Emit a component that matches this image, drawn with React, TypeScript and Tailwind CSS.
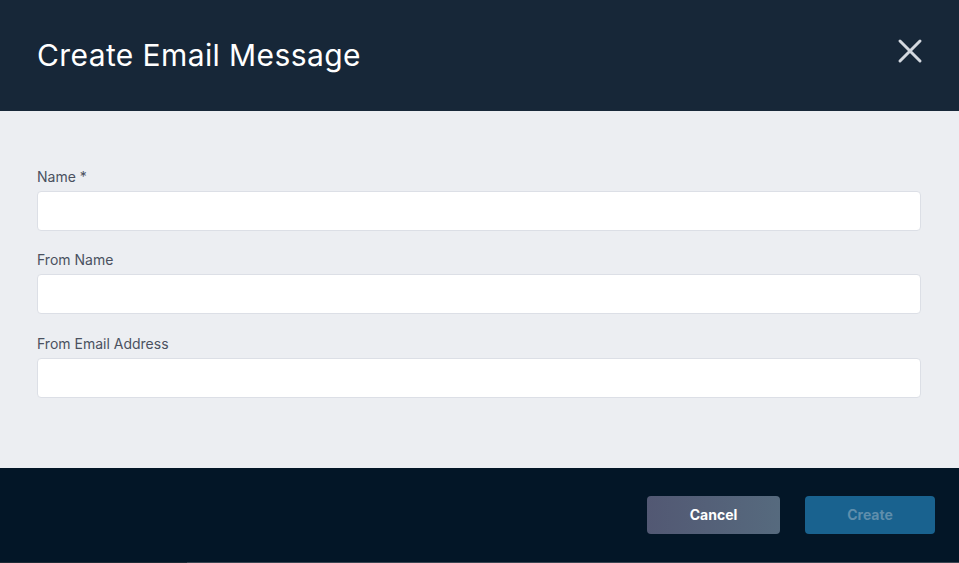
import React from 'react';

const fields = [
  { label: 'Name *', name: 'name' },
  { label: 'From Name', name: 'fromName' },
  { label: 'From Email Address', name: 'fromEmail' },
];

export default function App() {
  return (
    <div className="w-[959px] h-[563px] flex flex-col font-['Inter',sans-serif] overflow-hidden">
      {/* Header */}
      <div className="h-[111px] shrink-0 bg-[#172738] flex items-center justify-between pl-[37px] pr-[36px]">
        <h1 className="text-[30px] leading-none text-white font-normal tracking-[0.4px] -mt-[2px]">
          Create Email Message
        </h1>
        <button type="button" className="text-[#d3d8df] -mt-[9px]" aria-label="Close">
          <svg width="26" height="26" viewBox="0 0 26 26" fill="none" stroke="currentColor" strokeWidth="3" strokeLinecap="round">
            <path d="M3 3L23 23M23 3L3 23" />
          </svg>
        </button>
      </div>

      {/* Body */}
      <div className="h-[357px] shrink-0 bg-[#eceef2] pt-[57px] px-[37px] pr-[38px] flex flex-col gap-[20px]">
        {fields.map((f, i) => (
          <div key={f.name} className={i === 2 ? 'flex flex-col gap-[5px] mt-[1px]' : 'flex flex-col gap-[5px]'}>
            <label className="text-[14px] leading-[18px] text-[#4a5160]">{f.label}</label>
            <input
              name={f.name}
              type="text"
              className="h-[40px] w-full bg-white border border-[#dcdfe6] rounded-[4px] px-3 text-sm outline-none"
            />
          </div>
        ))}
      </div>

      {/* Footer */}
      <div className="h-[94px] shrink-0 bg-[#031627] flex items-center justify-end gap-[25px] pr-[24px] pb-[1px]">
        <button
          type="button"
          className="w-[133px] h-[38px] rounded-[4px] bg-gradient-to-r from-[#525873] to-[#566a7e] text-white text-[14px] font-bold"
        >
          Cancel
        </button>
        <button
          type="button"
          className="w-[130px] h-[38px] rounded-[4px] bg-[#19628f] text-[#5f8eac] text-[14px] font-bold"
        >
          Create
        </button>
      </div>
      <div className="h-[1px] shrink-0 flex">
        <div className="w-[187px] bg-[#1e2b36]" />
        <div className="flex-1 bg-[#3b4652]" />
      </div>
    </div>
  );
}
